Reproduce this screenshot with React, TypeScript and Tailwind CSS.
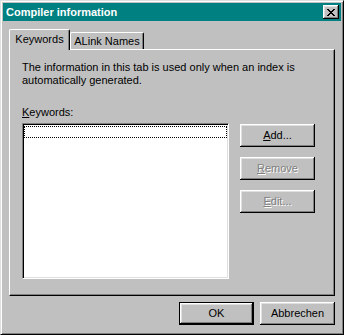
import React from "react";

const font = { fontFamily: '"Liberation Sans", Arial, sans-serif' };

function CloseGlyph() {
  const rows = ["XX....XX", ".XX..XX.", "..XXXX..", "...XX...", "..XXXX..", ".XX..XX.", "XX....XX"];
  const rects: React.ReactNode[] = [];
  rows.forEach((r, y) =>
    r.split("").forEach((c, x) => {
      if (c === "X") rects.push(<rect key={`${x}-${y}`} x={x} y={y} width={1} height={1} fill="#000" />);
    })
  );
  return (
    <svg width="8" height="7" viewBox="0 0 8 7" shapeRendering="crispEdges">
      {rects}
    </svg>
  );
}

function Btn({
  children,
  disabled,
  isDefault,
}: {
  children: React.ReactNode;
  disabled?: boolean;
  isDefault?: boolean;
}) {
  const bevel =
    "shadow-[inset_-1px_-1px_#000,inset_1px_1px_#fff,inset_-2px_-2px_#808080,inset_2px_2px_#dfdfdf]";
  if (isDefault) {
    return (
      <div className="w-[75px] h-[23px] border border-black bg-[#c0c0c0]">
        <div className={`w-full h-full flex items-center justify-center text-[11px] text-black shadow-[inset_-1px_-1px_#000,inset_1px_1px_#fff,inset_-2px_-2px_#808080,inset_2px_2px_#dfdfdf]`}>
          {children}
        </div>
      </div>
    );
  }
  return (
    <div
      className={`w-[75px] h-[23px] bg-[#c0c0c0] flex items-center justify-center text-[11px] ${bevel} ${
        disabled ? "text-[#808080] [text-shadow:1px_1px_0_#fff]" : "text-black"
      }`}
    >
      {children}
    </div>
  );
}

export default function App() {
  return (
    <div
      style={font}
      className="w-[344px] h-[335px] bg-[#c0c0c0] border border-[#dfdfdf] border-r-black border-b-black shadow-[inset_1px_1px_#fff,inset_-1px_-1px_#808080] p-[2px] flex flex-col"
    >
      {/* Title bar */}
      <div className="h-[18px] bg-[#008080] flex items-center justify-between shrink-0">
        <span className="pl-[3px] text-white font-bold text-[11px] leading-[13px]">Compiler information</span>
        <div className="mr-[2px] w-[16px] h-[14px] bg-[#c0c0c0] flex items-center justify-center shadow-[inset_-1px_-1px_#000,inset_1px_1px_#fff,inset_-2px_-2px_#808080,inset_2px_2px_#dfdfdf]">
          <CloseGlyph />
        </div>
      </div>

      {/* Body */}
      <div className="flex-1 flex flex-col px-[6px] pt-[8px] pb-[7px]">
        {/* Tabs */}
        <div className="h-[20px] flex items-end shrink-0 relative z-10">
          <div className="w-[61px] h-[21px] -mb-[1px] bg-[#c0c0c0] border-l border-t border-white border-r border-r-black rounded-tl-[2px] rounded-tr-[2px] shadow-[inset_-1px_0_#808080] flex justify-center pt-[3px]">
            <span className="text-[11px] leading-[13px] text-black">Keywords</span>
          </div>
          <div className="w-[74px] h-[17px] bg-[#c0c0c0] border-t border-white border-l border-r border-r-black rounded-tl-[2px] rounded-tr-[2px] shadow-[inset_-1px_0_#808080] flex justify-center pt-[2px]">
            <span className="text-[11px] leading-[13px] text-black">ALink Names</span>
          </div>
        </div>

        {/* Panel */}
        <div className="h-[247px] shrink-0 border border-white border-r-black border-b-black shadow-[inset_-1px_-1px_#808080] pl-[12px] pt-[11px] flex flex-col">
          <p className="text-[11px] leading-[13px] text-black">
            The information in this tab is used only when an index is
            <br />
            automatically generated.
          </p>
          <div className="mt-[19px] text-[11px] leading-[13px] text-black">
            <span className="underline">K</span>eywords:
          </div>
          <div className="mt-[4px] flex">
            <div className="w-[207px] h-[156px] bg-white border border-[#808080] border-r-white border-b-white shadow-[inset_1px_1px_#000,inset_-1px_-1px_#dfdfdf] p-[1px]">
              <div className="mt-[1px] h-[12px] w-full border border-dotted border-black" />
            </div>
            <div className="ml-[11px] mt-[1px] flex flex-col gap-[10px]">
              <Btn>
                <span>
                  <span className="underline">A</span>dd...
                </span>
              </Btn>
              <Btn disabled>
                <span>
                  <span className="underline">R</span>emove
                </span>
              </Btn>
              <Btn disabled>
                <span>
                  <span className="underline">E</span>dit...
                </span>
              </Btn>
            </div>
          </div>
        </div>

        {/* Bottom buttons */}
        <div className="mt-[6px] flex justify-end gap-[6px]">
          <Btn isDefault>OK</Btn>
          <Btn>Abbrechen</Btn>
        </div>
      </div>
    </div>
  );
}
